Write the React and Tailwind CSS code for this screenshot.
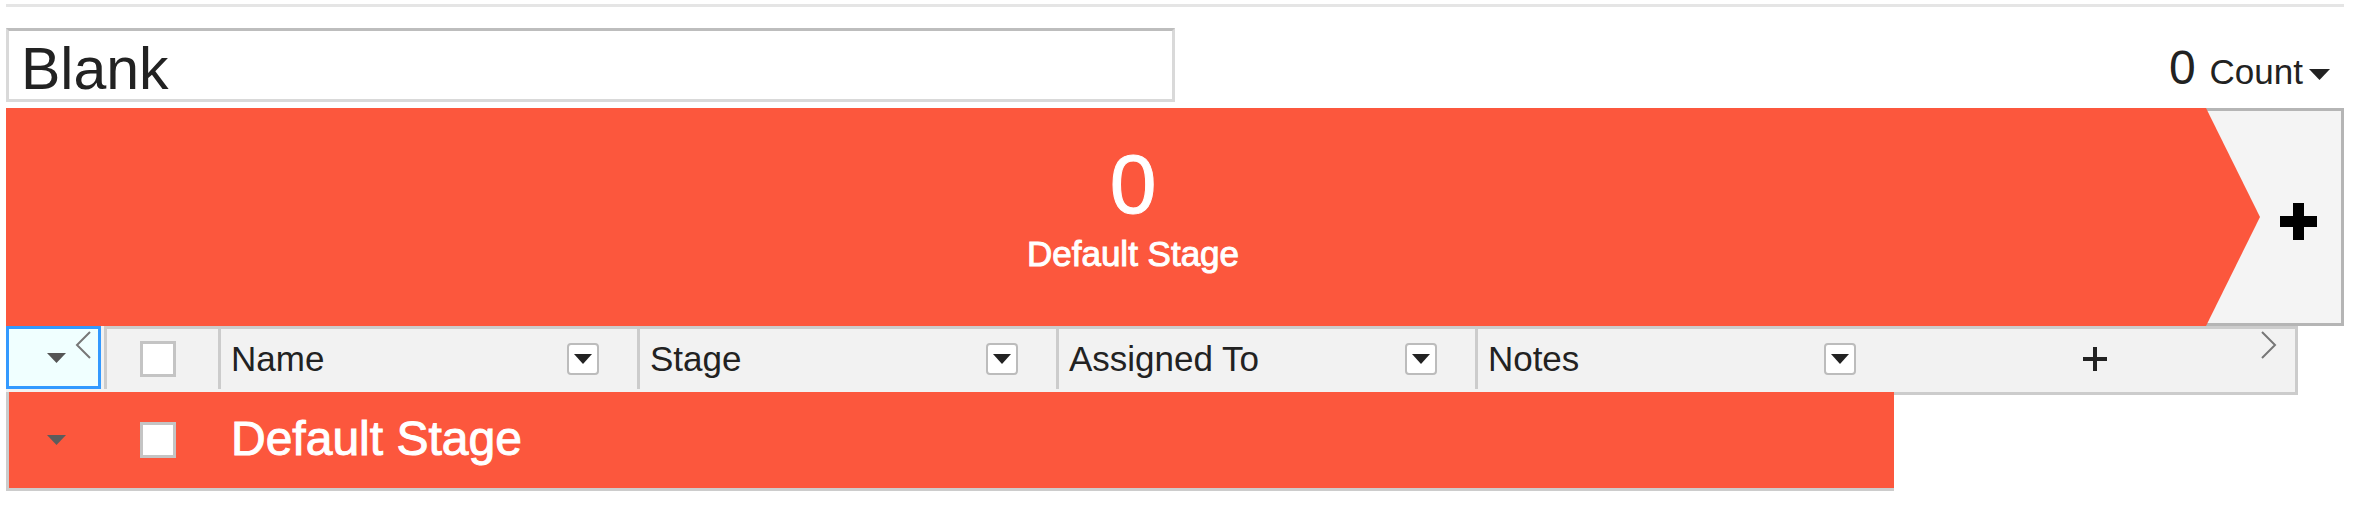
const columns = ["Name", "Stage", "Assigned To", "Notes"];

function Caret({ className }) {
  return (
    <svg viewBox="0 0 20 10" preserveAspectRatio="none" fill="currentColor" aria-hidden="true" className={className}>
      <path d="M0 0H20L10 10Z" />
    </svg>
  );
}

function Chevron({ d, className }) {
  return (
    <svg viewBox="0 0 16 28" fill="none" stroke="#777777" strokeWidth="2" aria-hidden="true" className={className}>
      <path d={d} />
    </svg>
  );
}

function TitleBar() {
  return (
    <div className="mt-[21px] flex items-center justify-between">
      <input
        aria-label="Title"
        defaultValue="Blank"
        className="h-[74px] w-1/2 border-[3px] border-[#d9d9d9] border-t-[#bdbdbd] bg-white px-3 pt-2 text-[59px] leading-[60px] outline-none"
      />
      <button className="mr-[14px] flex items-baseline pt-[10px]">
        <span className="text-[48px] leading-[56px]">0</span>
        <span className="ml-[14px] text-[35px] leading-[56px]">Count</span>
        <span className="ml-[6px] pb-1">
          <Caret className="h-[11px] w-[21px]" />
        </span>
      </button>
    </div>
  );
}

function Funnel() {
  return (
    <div className="mt-[6px] flex h-[218px]">
      <button className="relative z-10 flex flex-1 flex-col items-center bg-[#fc573d] pt-[28px] text-white [clip-path:polygon(0_0,calc(100%-54px)_0,100%_50%,calc(100%-54px)_100%,0_100%)]">
        <span className="text-[84px] leading-[96px] [-webkit-text-stroke:1px_white]">0</span>
        <span className="text-[35px] leading-[44px] [-webkit-text-stroke:1px_white]">Default Stage</span>
      </button>
      <button
        aria-label="Add stage"
        className="-ml-[54px] flex w-[138px] items-center justify-center border-[3px] border-l-0 border-[#b5b5b5] bg-[#f4f4f4] pt-2 pr-1 pl-[54px]"
      >
        <svg viewBox="0 0 37 37" className="size-[37px]" aria-hidden="true">
          <path d="M13 0H24V13H37V24H24V37H13V24H0V13H13Z" fill="black" />
        </svg>
      </button>
    </div>
  );
}

function Tick({ label }) {
  return (
    <input
      type="checkbox"
      aria-label={label}
      className="block size-[36px] appearance-none border-[3px] border-[#c4c4c4] bg-white checked:bg-[#3399ff]"
    />
  );
}

function HeaderCell({ name }) {
  return (
    <th scope="col" className="border-t-[3px] border-[#cccccc] bg-[#f2f2f2] p-0 pb-[3px] font-normal">
      <div className="flex h-[60px] items-center justify-between border-l-[3px] border-[#cccccc] pr-[38px] pl-[10px]">
        <span className="text-[35px] leading-[44px]">{name}</span>
        <button
          aria-label={`${name} options`}
          className="flex size-[32px] items-center justify-center rounded-[4px] border-2 border-[#bcbcbc] bg-white"
        >
          <Caret className="h-[10px] w-[18px]" />
        </button>
      </div>
    </th>
  );
}

function Sheet() {
  return (
    <div className="pr-[46px]">
      <table className="w-full table-fixed border-separate border-spacing-0 text-left">
        <colgroup>
          <col className="w-[98px]" />
          <col className="w-[114px]" />
          <col className="w-[18.28%]" />
          <col className="w-[18.28%]" />
          <col className="w-[18.28%]" />
          <col className="w-[18.28%]" />
          <col />
        </colgroup>
        <thead>
          <tr>
            <th className="bg-[#f2f2f2] p-0 pb-[3px]">
              <button
                aria-label="Collapse all"
                className="flex h-[63px] w-[95px] items-center gap-[9px] border-[3px] border-[#3399ff] bg-[#f0ffff] pl-[38px] text-[#555555]"
              >
                <Caret className="h-[10px] w-[19px]" />
                <Chevron d="M15 1L2 14L15 27" className="mt-[2px] h-[28px] w-[16px] self-start" />
              </button>
            </th>
            <th className="border-t-[3px] border-[#cccccc] bg-[#f2f2f2] p-0 pb-[3px]">
              <div className="flex h-[60px] items-center border-l-[3px] border-[#cccccc] pl-[33px]">
                <Tick label="Select all" />
              </div>
            </th>
            {columns.map((name) => (
              <HeaderCell key={name} name={name} />
            ))}
            <th className="border-t-[3px] border-r-[3px] border-[#cccccc] bg-[#f2f2f2] p-0 pb-[3px]">
              <div className="grid h-[60px] grid-cols-[1fr_auto_1fr] items-center pr-[18px]">
                <button aria-label="Add column" className="col-start-2 ml-[20px]">
                  <svg viewBox="0 0 24 24" className="size-[24px]" stroke="currentColor" strokeWidth="4" aria-hidden="true">
                    <path d="M12 0V24M0 12H24" />
                  </svg>
                </button>
                <button aria-label="Scroll right" className="mt-[2px] self-start justify-self-end">
                  <Chevron d="M1 1L14 14L1 27" className="h-[28px] w-[16px]" />
                </button>
              </div>
            </th>
          </tr>
        </thead>
        <tbody>
          <tr className="h-[99px]">
            <td className="border-b-[3px] border-l-[3px] border-[#cccccc] bg-[#fc573d] p-0 pl-[38px]">
              <button aria-label="Collapse Default Stage" className="block text-[#5c5c5c]">
                <Caret className="h-[10px] w-[19px]" />
              </button>
            </td>
            <td className="border-b-[3px] border-[#cccccc] bg-[#fc573d] p-0 pl-[36px]">
              <Tick label="Select Default Stage" />
            </td>
            <td
              colSpan={4}
              className="border-b-[3px] border-[#cccccc] bg-[#fc573d] p-0 pb-[2px] pl-[13px] text-[48px] leading-[56px] text-white [-webkit-text-stroke:1px_white]"
            >
              Default Stage
            </td>
            <td className="border-t-[3px] border-[#cccccc] p-0" />
          </tr>
        </tbody>
      </table>
    </div>
  );
}

export default function App() {
  return (
    <main className="bg-white pt-1 pr-[14px] pl-[6px] font-['Liberation_Sans',Arial,sans-serif] text-[#222222]">
      <div className="h-[3px] bg-[#e5e5e5]" />
      <TitleBar />
      <Funnel />
      <Sheet />
    </main>
  );
}
